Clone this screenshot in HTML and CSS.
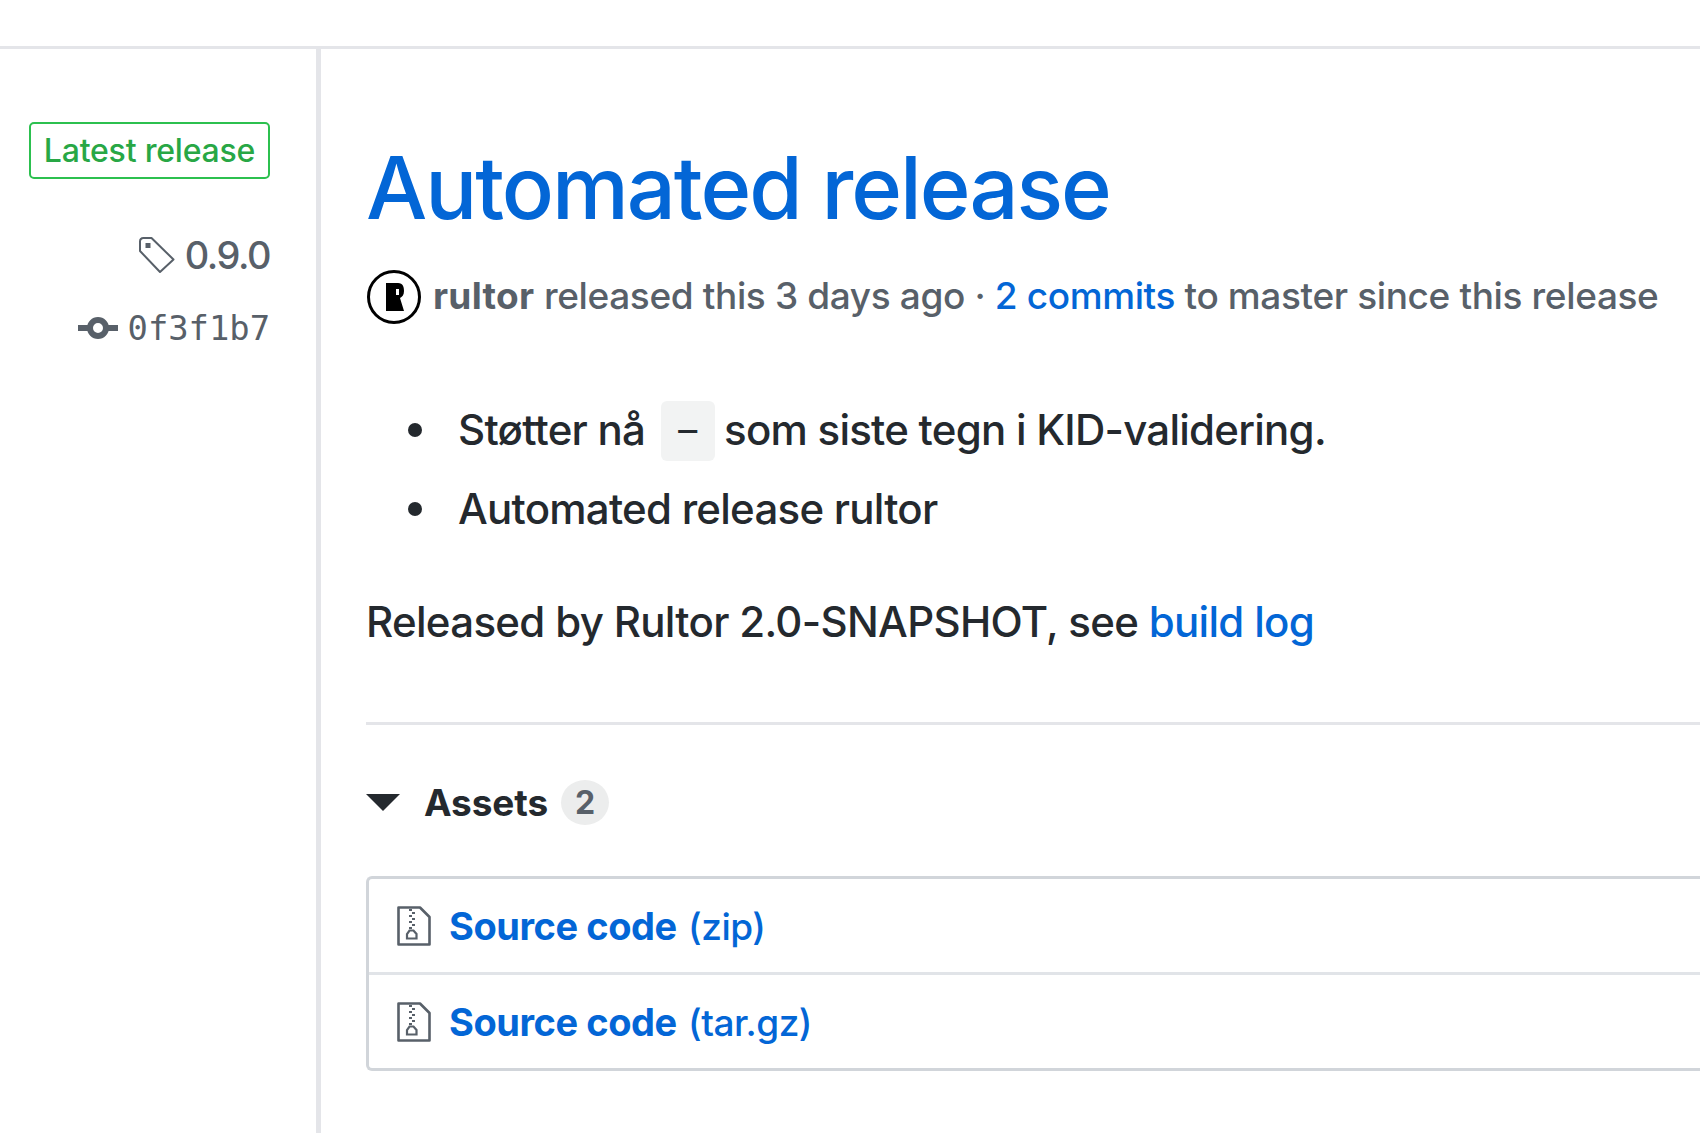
FILE: index.html
```html
<!DOCTYPE html>
<html lang="en">
<head>
<meta charset="utf-8">
<title>Automated release</title>
<link rel="stylesheet" href="styles.css">
</head>
<body>
<div class="topbar"></div>
<main class="layout">
  <aside class="side">
    <span class="latest">Latest release</span>
    <div class="tag">
      <svg class="tag-icon" viewBox="0 0 38 38" width="38" height="38"><path d="M2 5.500C2 3.500 3.500 2 5.500 2H13.500L35.500 23.500 22 36 2 15Z" fill="none" stroke="#586069" stroke-width="2" stroke-linejoin="round"/><rect x="7.500" y="7" width="5" height="5" fill="#586069"/></svg>
      <span>0.9.0</span>
    </div>
    <div class="commit">
      <svg class="commit-icon" viewBox="0 0 40 22" width="40" height="22"><rect x="0" y="8" width="40" height="6" fill="#586069"/><circle cx="20" cy="11" r="8" fill="#fff" stroke="#586069" stroke-width="6"/></svg>
      <code>0f3f1b7</code>
    </div>
  </aside>
  <article class="content">
    <h1 class="title"><a href="#">Automated release</a></h1>
    <div class="meta">
      <svg class="avatar" viewBox="0 0 54 54" width="54" height="54"><circle cx="27" cy="27" r="25.500" fill="#fff" stroke="#000" stroke-width="3"/><path d="M19 13H31C36 13 37 17 37 21C37 25 35 27 33 28L37 41H19Z" fill="#000"/><path d="M29 19H32V25H29Z" fill="#fff"/></svg>
      <span class="meta-text"><b>rultor</b> released this 3 days ago · <a href="#">2 commits</a> to master since this release</span>
    </div>
    <ul class="notes">
      <li><span>Støtter nå <code class="dash">–</code> som siste tegn i KID-validering.</span></li>
      <li><span>Automated release rultor</span></li>
    </ul>
    <p class="by">Released by Rultor 2.0-SNAPSHOT, see <a href="#">build log</a></p>
    <hr class="rule">
    <div class="assets-head">
      <span class="caret"></span>
      <span class="assets-label">Assets</span>
      <span class="count">2</span>
    </div>
    <div class="assets">
      <div class="asset">
        <svg class="zip" viewBox="0 0 34 40" width="34" height="40"><path d="M1.500 1.500H23L32.500 11V38.500H1.500Z" fill="none" stroke="#586069" stroke-width="2.600" stroke-linejoin="round"/><path d="M12 4h3M15 7h3M12 10h3M15 13h3M12 16h3M15 19h3M12 22h3" stroke="#586069" stroke-width="2.200" fill="none"/><path d="M10 32.500V28L12.500 24.500H16.500L19.500 28V32.500Z" fill="none" stroke="#586069" stroke-width="2.200"/></svg>
        <a href="#"><b>Source code</b> <span class="ext">(zip)</span></a>
      </div>
      <div class="asset">
        <svg class="zip" viewBox="0 0 34 40" width="34" height="40"><path d="M1.500 1.500H23L32.500 11V38.500H1.500Z" fill="none" stroke="#586069" stroke-width="2.600" stroke-linejoin="round"/><path d="M12 4h3M15 7h3M12 10h3M15 13h3M12 16h3M15 19h3M12 22h3" stroke="#586069" stroke-width="2.200" fill="none"/><path d="M10 32.500V28L12.500 24.500H16.500L19.500 28V32.500Z" fill="none" stroke="#586069" stroke-width="2.200"/></svg>
        <a href="#"><b>Source code</b> <span class="ext">(tar.gz)</span></a>
      </div>
    </div>
  </article>
</main>
</body>
</html>
```
FILE: styles.css
```css
html, body { margin: 0; padding: 0; background: #fff; }
body { width: 1700px; height: 1133px; overflow: hidden; font-family: Inter, "Liberation Sans", sans-serif; color: #24292e; }
a { color: #0366d6; text-decoration: none; }
.topbar { height: 46px; border-bottom: 3px solid #e4e5e9; }
.layout { display: flex; height: 1084px; }
.side { box-sizing: border-box; width: 321px; flex: none; border-right: 5px solid #e4e5e9; padding: 73px 46px 0 0; display: flex; flex-direction: column; align-items: flex-end; }
.latest { box-sizing: border-box; height: 57px; width: 241px; display: flex; align-items: center; justify-content: center; border: 2px solid #2cc04f; border-radius: 5px; color: #28a745; font-size: 32px; font-weight: 450; letter-spacing: -0.200px; }
.tag { display: flex; align-items: center; gap: 9px; margin-top: 46px; color: #586069; font-size: 38px; font-weight: 450; letter-spacing: -1.500px; height: 60px; }
.tag-icon { flex: none; }
.commit { display: flex; align-items: center; gap: 10px; margin-top: 18px; height: 50px; color: #586069; }
.commit code { font-family: "DejaVu Sans Mono", monospace; font-size: 33.800px; }
.content { flex: 1; min-width: 0; padding: 82px 0 0 45px; }
.title { margin: 0; font-size: 86.500px; font-weight: 450; line-height: 114px; letter-spacing: -2.050px; }
.meta { display: flex; align-items: center; gap: 12px; margin-top: 22px; padding-left: 1px; color: #586069; font-size: 37px; font-weight: 450; letter-spacing: -0.370px; }
.avatar { flex: none; margin-top: 3px; }
.meta b { font-weight: 650; letter-spacing: 0.300px; }
.notes { list-style: none; margin: 74px 0 0; padding: 0 0 0 42px; font-size: 42px; font-weight: 450; line-height: 64px; letter-spacing: -0.750px; }
.notes li { display: flex; align-items: center; gap: 36px; }
.notes li::before { content: ""; width: 14px; height: 14px; border-radius: 50%; background: #24292e; flex: none; }
.notes li + li { margin-top: 15px; }
.dash { display: inline-block; background: #f2f3f3; border-radius: 6px; font-family: "Liberation Mono", monospace; font-size: 44px; width: 54px; text-align: center; line-height: 60px; margin: 0 -1px 0 5px; letter-spacing: 0; vertical-align: 2px; }
.by { margin: 49px 0 0; font-size: 42px; font-weight: 450; line-height: 64px; letter-spacing: -0.680px; }
.rule { margin: 68px 0 0; border: 0; border-top: 3px solid #e4e5e9; }
.assets-head { display: flex; align-items: center; margin-top: 55px; height: 44px; }
.caret { width: 0; height: 0; border: 17px solid transparent; border-top: 17px solid #24292e; border-bottom: 0; margin-right: 24px; }
.assets-label { font-size: 37px; font-weight: 650; letter-spacing: -0.100px; }
.count { width: 48px; height: 45px; margin-left: 13px; border-radius: 50%; background: #eceded; color: #586069; font-size: 32px; font-weight: 650; display: flex; align-items: center; justify-content: center; }
.assets { margin-top: 52px; border: 3px solid #d1d5da; border-right: 0; border-radius: 6px 0 0 6px; }
.asset { height: 93px; display: flex; align-items: center; gap: 18px; padding-left: 28px; font-size: 37px; font-weight: 450; letter-spacing: -0.500px; }
.asset + .asset { border-top: 3px solid #e1e4e8; }
.asset b { font-size: 38px; font-weight: 650; letter-spacing: -0.450px; }
.ext { margin-left: 2px; }
.zip { flex: none; }
```
